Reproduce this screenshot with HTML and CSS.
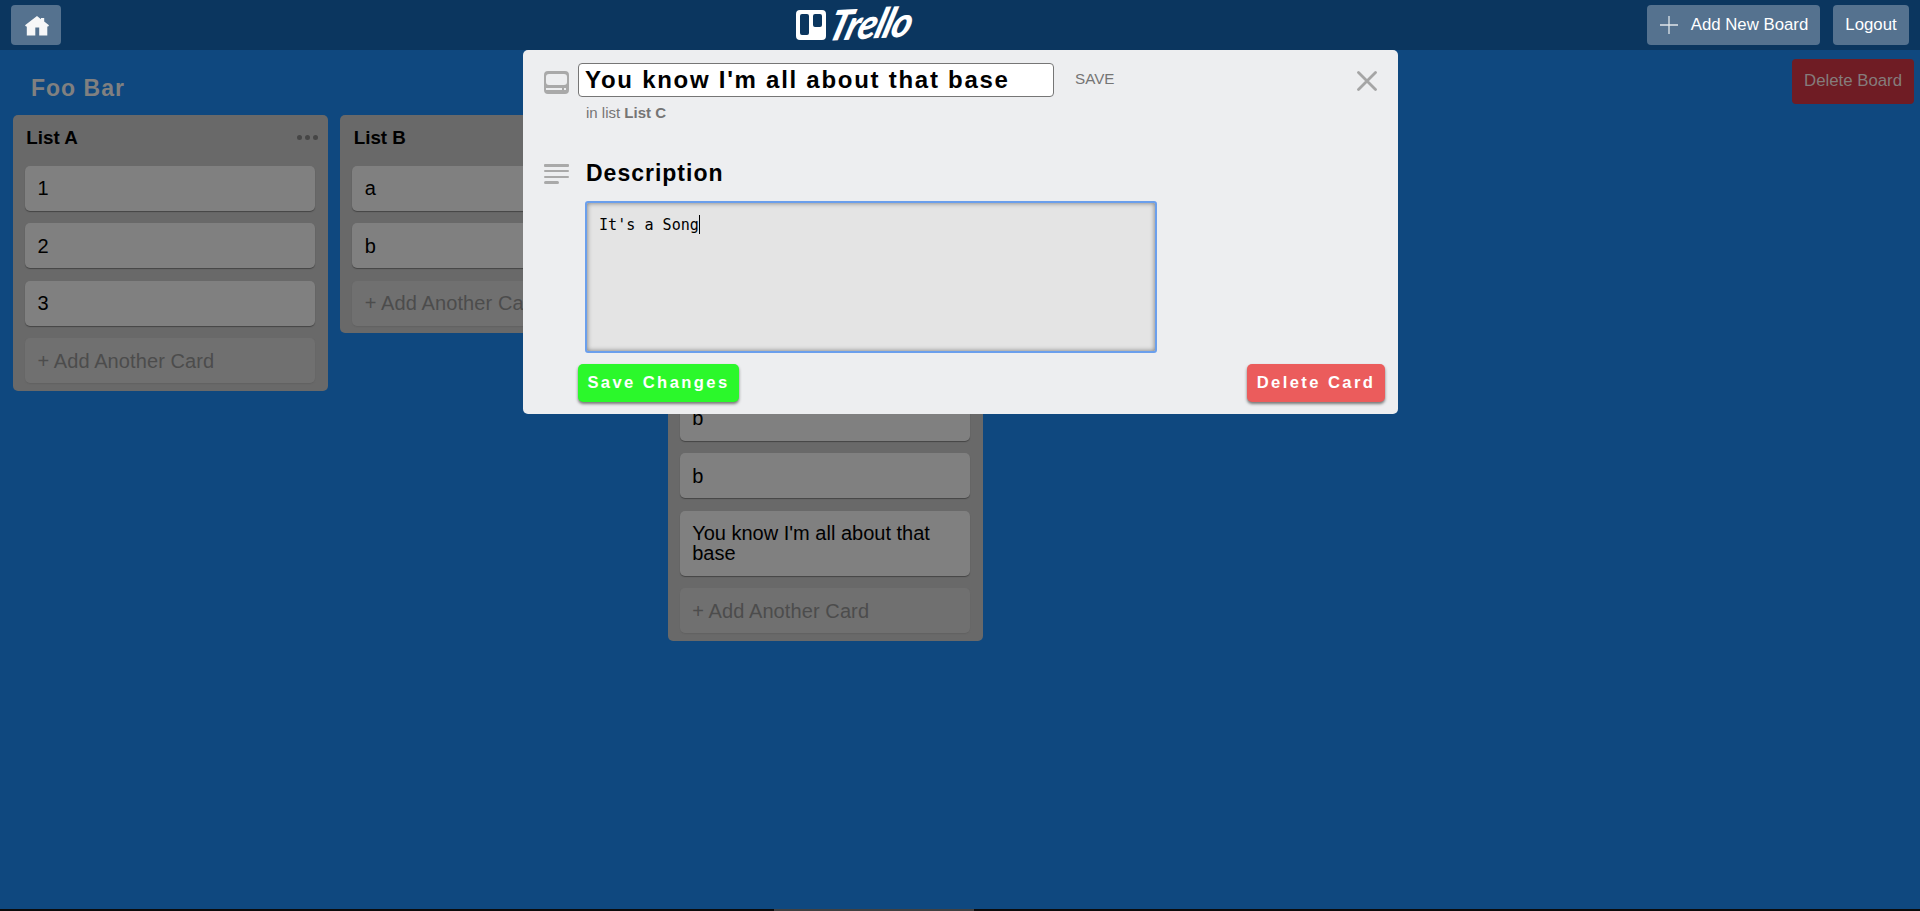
FILE: index.html
```html
<!DOCTYPE html>
<html lang="en">
<head>
<meta charset="utf-8">
<title>Trello</title>
<link rel="stylesheet" href="styles.css">
</head>
<body>
<header class="topbar">
  <button class="nav-btn home" aria-label="Home">
    <svg width="24" height="20" viewBox="0 0 24 20"><path fill="#f6f7f8" d="M12 0 0 9.2 1 10.400H1.800V19.400H10.300V11.500H14.200V19.400H22.300V10.400H23.200L24 9.200 19.200 5.400V2H16V3.200Z"/></svg>
  </button>
  <div class="logo">
    <svg width="30" height="30" viewBox="0 0 30 30"><path fill="#fff" fill-rule="evenodd" d="M4 0H26Q30 0 30 4V26Q30 30 26 30H4Q0 30 0 26V4Q0 0 4 0ZM6 4Q4 4 4 6V23Q4 25 6 25H11Q13 25 13 23V6Q13 4 11 4ZM19 4Q17 4 17 6V15Q17 17 19 17H24Q26 17 26 15V6Q26 4 24 4Z"/></svg>
    <span class="wordmark">Trello</span>
  </div>
  <div class="actions">
    <button class="nav-btn add">
      <svg width="18" height="18" viewBox="0 0 18 18"><path d="M9 0V18M0 9H18" stroke="#dfe5ea" stroke-width="1.300"/></svg>
      <span>Add New Board</span>
    </button>
    <button class="nav-btn logout">Logout</button>
  </div>
</header>
<main class="board">
  <div class="board-head">
    <h1>Foo Bar</h1>
    <button class="delete-board">Delete Board</button>
  </div>
  <div class="lists">
    <section class="list">
      <div class="list-head"><h2>List A</h2><span class="dots"><i></i><i></i><i></i></span></div>
      <div class="card">1</div>
      <div class="card">2</div>
      <div class="card">3</div>
      <div class="card new">+ Add Another Card</div>
    </section>
    <section class="list">
      <div class="list-head"><h2>List B</h2><span class="dots"><i></i><i></i><i></i></span></div>
      <div class="card">a</div>
      <div class="card">b</div>
      <div class="card new">+ Add Another Card</div>
    </section>
    <section class="list">
      <div class="list-head"><h2>List C</h2><span class="dots"><i></i><i></i><i></i></span></div>
      <div class="card"></div>
      <div class="card"></div>
      <div class="card"></div>
      <div class="card"></div>
      <div class="card">b</div>
      <div class="card">b</div>
      <div class="card">You know I'm all about that base</div>
      <div class="card new">+ Add Another Card</div>
    </section>
  </div>
</main>
<div class="scrollbar"><div class="thumb"></div></div>
<div class="modal">
  <div class="title-row">
    <svg class="card-icon" width="25" height="23" viewBox="0 0 25 23"><path fill="#a9a9a9" fill-rule="evenodd" d="M4 0H21Q25 0 25 4V19Q25 23 21 23H4Q0 23 0 19V4Q0 0 4 0ZM5 3Q2 3 2 6V11Q2 14 5 14H20Q23 14 23 11V6Q23 3 20 3ZM2 17V19H18V17ZM20 17V19H22V17Z"/></svg>
    <div class="title-input">You know I'm all about that base</div>
    <span class="save">SAVE</span>
    <svg class="close" width="20" height="20" viewBox="0 0 20 20"><path d="M1.500 1.500 18.500 18.500M18.500 1.500 1.500 18.500" stroke="#a5a5a5" stroke-width="2.800" stroke-linecap="round"/></svg>
  </div>
  <p class="in-list">in list <b>List C</b></p>
  <div class="desc-head">
    <svg width="25" height="20" viewBox="0 0 25 20" fill="#a9a9a9"><rect width="25" height="3" rx="1"/><rect y="6" width="25" height="2" rx="1"/><rect y="12" width="25" height="2" rx="1"/><rect y="17" width="15" height="3" rx="1.500"/></svg>
    <h2>Description</h2>
  </div>
  <div class="textarea">It's a Song<span class="caret"></span></div>
  <div class="buttons">
    <button class="save-changes">Save Changes</button>
    <button class="delete-card">Delete Card</button>
  </div>
</div>
</body>
</html>
```
FILE: styles.css
```css
* { box-sizing: border-box; }
body {
  margin: 0;
  height: 911px;
  overflow: hidden;
  display: flex;
  flex-direction: column;
  position: relative;
  background: #0f487f;
  font-family: "Liberation Sans", Arial, sans-serif;
  color: #000;
}
h1, h2, p { margin: 0; }
button { border: 0; padding: 0; font-family: inherit; white-space: nowrap; }
svg { display: block; flex: none; }

.topbar {
  flex: none;
  height: 50px;
  padding: 0 11px;
  display: grid;
  grid-template-columns: 1fr auto 1fr;
  align-items: center;
  background: #0b365f;
}
.nav-btn {
  height: 40px;
  border-radius: 4px;
  background: #55728f;
  color: #fff;
  font-size: 16.8px;
  display: flex;
  align-items: center;
  justify-content: center;
  padding-bottom: 1px;
}
.home { width: 50px; padding: 1px 0 0 1px; }
.logo { display: flex; align-items: center; gap: 5px; width: 128px; height: 50px; margin-right: 200px; color: #fff; }
.wordmark {
  font: italic 900 35px/38px Lato, sans-serif;
  letter-spacing: -1px;
  transform-origin: left center;
  transform: translateY(-1px) rotate(-3deg) skewX(-20deg) scale(1.08, 1.18);
}
.actions { display: flex; justify-content: flex-end; gap: 13px; }
.add { width: 173px; gap: 13px; }
.add svg { margin: 1px 0 0 1px; }
.logout { width: 76px; }

.board { flex: 1; }
.board-head {
  height: 65px;
  padding: 9px 6px 0 31px;
  display: flex;
  justify-content: space-between;
  align-items: flex-start;
}
.board-head h1 {
  font-size: 23px;
  line-height: 28px;
  letter-spacing: 1px;
  color: #808080;
  padding-top: 15px;
}
.delete-board {
  width: 122px;
  height: 45px;
  padding-bottom: 2px;
  border-radius: 4px;
  background: #6f1c24;
  color: #857c7c;
  font-size: 16.8px;
}

.lists { display: flex; align-items: flex-start; gap: 12.4px; padding-left: 13px; }
.list {
  width: 315px;
  padding: 0 13px 7.900px 12px;
  border-radius: 5px;
  background: #696969;
  display: flex;
  flex-direction: column;
  gap: 12.5px;
}
.list-head {
  height: 38.100px;
  padding: 7px 0 0 1.300px;
  margin-right: -3px;
  display: flex;
  justify-content: space-between;
  align-items: center;
}
.list-head h2 { font-size: 18.8px; line-height: 22px; }
.dots { display: flex; gap: 3px; }
.dots i { width: 5px; height: 5px; border-radius: 50%; background: #464646; }
.card {
  min-height: 45px;
  padding: 12.5px 12.400px;
  border-radius: 5px;
  background: #808080;
  box-shadow: 0 1px 1px #454545;
  font-size: 20px;
  line-height: 20px;
}
.card.new { background: #707070; color: #4c4c4c; box-shadow: 0 1px 1px #626262; letter-spacing: 0.1px; }

.scrollbar { flex: none; height: 2px; background: #0b0b0b; display: flex; justify-content: center; }
.thumb { width: 200px; margin-right: 172px; background: #404040; }

.modal {
  position: absolute;
  left: 523px;
  top: 50px;
  width: 875px;
  height: 364px;
  padding: 13px 13px 12px 21px;
  border-radius: 5px;
  background: #edeef0;
  display: flex;
  flex-direction: column;
}
.title-row { display: flex; align-items: flex-start; }
.card-icon { margin: 8px 9px 0 0; }
.title-input {
  width: 476px;
  height: 34px;
  padding-left: 6px;
  border: 1px solid #767676;
  border-radius: 4px;
  background: #fff;
  font-size: 24px;
  font-weight: bold;
  line-height: 31px;
  letter-spacing: 1.73px;
  white-space: nowrap;
}
.save { margin: 7px 0 0 21px; font-size: 15.2px; line-height: 18px; color: #757575; }
.close { margin: 8px 8px 0 auto; }
.in-list { margin: 7px 0 0 42px; font-size: 15px; line-height: 17px; color: #757575; }
.desc-head { display: flex; align-items: center; gap: 17px; margin-top: 38px; height: 28px; }
.desc-head svg { margin-top: 1px; }
.desc-head h2 { font-size: 23px; line-height: 28px; letter-spacing: 1px; }
.textarea {
  width: 572px;
  height: 152px;
  margin: 14px 0 0 41px;
  padding: 12px;
  border: 2px solid #6b9fec;
  border-radius: 3px;
  background: #e4e4e4;
  box-shadow: inset 0 0 5px #777;
  font: 15.1px/20px "DejaVu Sans Mono", monospace;
  display: flex;
}
.caret { width: 1px; height: 19px; background: #000; }
.buttons { display: flex; justify-content: space-between; margin: 11px 0 0 34px; }
.buttons button {
  height: 38px;
  border-radius: 5px;
  color: #fff;
  font-size: 16.6px;
  font-weight: bold;
  letter-spacing: 2.4px;
  box-shadow: 0 2px 3px #777;
}
.save-changes { width: 161px; background: #2bf82b; }
.buttons .delete-card { width: 138px; background: #eb5c5c; }
```
